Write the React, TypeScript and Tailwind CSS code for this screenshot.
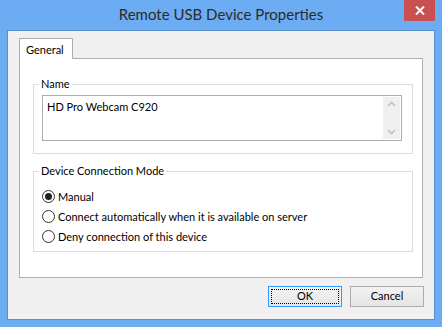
import { useState } from 'react';

const FONT = { fontFamily: '"Segoe UI", Lato, "Liberation Sans", sans-serif' };

function Radio({ checked, label, onSelect }: { checked: boolean; label: string; onSelect: () => void }) {
  return (
    <div className="flex items-center h-[20px] gap-[3px] cursor-default" onClick={onSelect}>
      <span className="w-[13px] h-[13px] rounded-full border border-[#333] bg-white flex items-center justify-center">
        {checked && <span className="w-[7px] h-[7px] rounded-full bg-[#222]" />}
      </span>
      <span className="text-[11px] text-[#000] leading-none">{label}</span>
    </div>
  );
}

export default function App() {
  const [mode, setMode] = useState('manual');

  const modes = [
    { id: 'manual', label: 'Manual' },
    { id: 'auto', label: 'Connect automatically when it is available on server' },
    { id: 'deny', label: 'Deny connection of this device' },
  ];

  return (
    <div className="w-[442px] h-[327px] bg-[#6cacf2] flex flex-col px-[7px] pb-[7px]" style={FONT}>
      <div className="relative h-[30px] flex items-center justify-center">
        <span className="text-[15px] text-[#2b2b2b] -mt-[1px]">Remote USB Device Properties</span>
        <div className="absolute right-0 top-0 w-[31px] h-[21px] bg-[#c75050] flex items-center justify-center">
          <svg width="10" height="9" viewBox="0 0 10 9">
            <path d="M1 0.5 L9 8.5 M9 0.5 L1 8.5" stroke="#fff" strokeWidth="2" />
          </svg>
        </div>
      </div>

      <div className="flex-1 border border-[#5a8fcb] bg-[#f0f0f0] flex flex-col px-[11px] pt-[7px]">
        <div className="flex">
          <div className="relative z-10 w-[54px] h-[21px] -mb-px bg-white border border-b-0 border-[#adadad] pl-[6px] pt-[3px] text-[11px] text-[#000]">
            General
          </div>
        </div>

        <div className="h-[220px] border border-[#adadad] bg-white pl-[13px] pr-[9px] pt-[17px]">
          <fieldset className="border border-[#dcdcdc] pl-[8px] pr-[10px] pb-[12px] pt-[3px]">
            <legend className="-ml-[3px] px-[2px] text-[11px] text-[#000] leading-[16px]">Name</legend>
            <div className="h-[46px] border border-[#abadb3] bg-white flex">
              <div className="flex-1 pl-[4px] pt-[3px] text-[11px] text-[#000]">HD Pro Webcam C920</div>
              <div className="w-[17px] my-[1px] mr-[1px] bg-[#f0f0f0] flex flex-col justify-between py-[4px] items-center">
                <svg width="9" height="6" viewBox="0 0 9 6">
                  <path d="M1 5 L4.5 1.5 L8 5" stroke="#c2c2c2" strokeWidth="1.6" fill="none" />
                </svg>
                <svg width="9" height="6" viewBox="0 0 9 6">
                  <path d="M1 1 L4.5 4.5 L8 1" stroke="#c2c2c2" strokeWidth="1.6" fill="none" />
                </svg>
              </div>
            </div>
          </fieldset>

          <fieldset className="mt-[9px] border border-[#dcdcdc] pl-[8px] pt-[7px] pb-[5px]">
            <legend className="-ml-[3px] px-[2px] text-[11px] text-[#000] leading-[16px]">Device Connection Mode</legend>
            {modes.map((m) => (
              <Radio key={m.id} checked={mode === m.id} label={m.label} onSelect={() => setMode(m.id)} />
            ))}
          </fieldset>
        </div>

        <div className="flex justify-end gap-[8px] mt-[8px] -mr-px">
          <button className="w-[74px] h-[21px] border border-[#3399ff] bg-gradient-to-b from-[#f2f2f2] to-[#e5e5e5] p-[2px]">
            <div className="h-full border border-dotted border-[#000] flex items-center justify-center text-[11px] text-[#000]">
              OK
            </div>
          </button>
          <button className="w-[74px] h-[21px] border border-[#acacac] bg-gradient-to-b from-[#f2f2f2] to-[#e5e5e5] flex items-center justify-center text-[11px] text-[#000]">
            Cancel
          </button>
        </div>
      </div>
    </div>
  );
}
